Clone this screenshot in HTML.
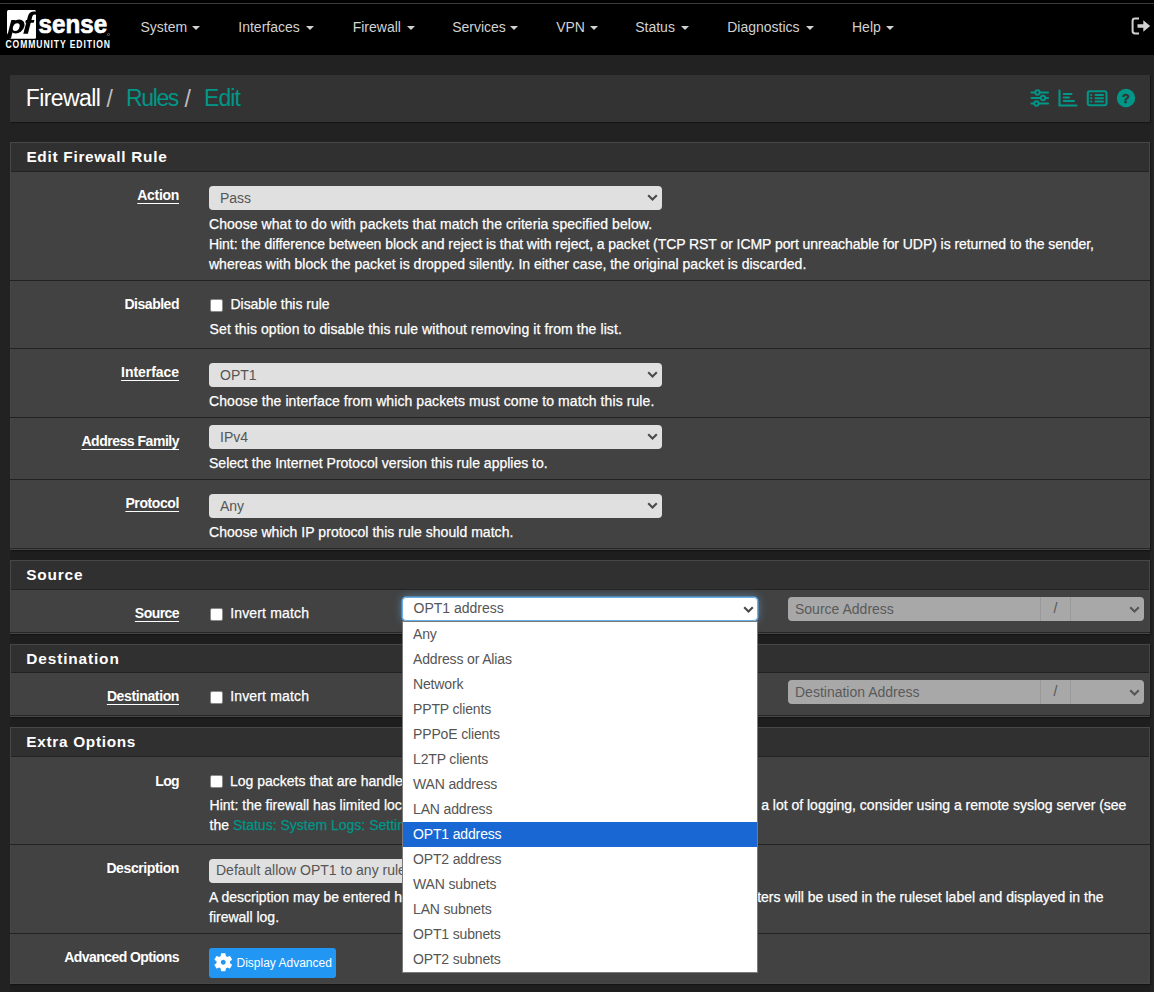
<!DOCTYPE html>
<html><head><meta charset="utf-8">
<style>
html,body{margin:0;padding:0;}
body{width:1154px;height:992px;overflow:hidden;position:relative;background:#222;font-family:"Liberation Sans",sans-serif;font-size:14px;color:#ffffff;}
div,span{box-sizing:border-box;}
.a{position:absolute;}
.t{position:absolute;white-space:nowrap;line-height:20px;font-size:14px;-webkit-text-stroke:0.25px currentColor;}
#nav{left:0;top:0;width:1154px;height:55px;background:#000;}
#navline{left:0;top:3px;width:1154px;height:1px;background:#3a3a3a;}
.ni{position:absolute;top:17px;line-height:20px;font-size:14px;color:#d2d2d2;white-space:nowrap;}
.caret{position:absolute;top:26px;width:0;height:0;border-left:4px solid transparent;border-right:4px solid transparent;border-top:4px solid #d2d2d2;}
#bc{left:10px;top:75px;width:1140px;height:47px;background:#333;box-shadow:1px 1px 1px rgba(0,0,0,0.35);}
.panel{position:absolute;left:10px;width:1140px;background:#424242;border:1px solid #474747;box-shadow:1px 1px 1px rgba(0,0,0,0.3);}
.ph{position:absolute;left:11px;width:1138px;background:#303030;}
.ptitle{position:absolute;font-weight:bold;font-size:15.4px;color:#fff;line-height:20px;white-space:nowrap;}
.sep{position:absolute;left:10px;width:1140px;height:1px;background:#222;}
.sepb{position:absolute;left:11px;width:1138px;height:1px;background:#262626;}
.lbl{position:absolute;right:975px;font-weight:bold;font-size:14px;color:#fff;line-height:20px;white-space:nowrap;}
.lbl.u{text-decoration:underline;text-underline-offset:3px;}
.sel{position:absolute;left:209px;width:453px;height:24px;background:#e0e0e0;border-radius:4px;}
.seltxt{position:absolute;left:11px;line-height:20px;font-size:14px;color:#555;white-space:nowrap;}
.chev{position:absolute;right:3.6px;top:8.3px;}
.cb{position:absolute;left:210px;width:13px;height:13px;background:#fff;border:1px solid #8a8a8a;border-radius:2px;}
.addr{position:absolute;left:788px;width:356px;height:24px;background:#a8a8a8;border-radius:4px;}
.addrtxt{position:absolute;left:7px;top:2px;line-height:20px;font-size:14px;color:#5a5a5a;white-space:nowrap;}
.addrslash{position:absolute;left:252px;top:0;width:31px;height:24px;border-left:1px solid #999;border-right:1px solid #999;text-align:center;line-height:22px;color:#555;}
.addr .chev{right:3.7px;top:8.6px;}
.inp{position:absolute;left:209px;width:453px;height:24px;background:#e0e0e0;border-radius:4px;}
.btn{position:absolute;left:209px;width:127px;height:30px;background:#2196f3;border-radius:3px;}
#osel{left:402px;top:597px;width:356px;height:24px;background:#fff;border:1px solid #66afe9;border-radius:4px;box-shadow:0 0 0 0.4px #66afe9,0 0 8px rgba(102,175,233,0.6);}
#dd{left:402px;top:621px;width:356px;height:352px;background:#fff;border:1px solid #7a7a7a;}
.ddi{position:absolute;left:0;right:0;height:25px;line-height:24px;padding-left:10px;font-size:14px;color:#555;white-space:nowrap;letter-spacing:-0.15px;}
</style></head><body>
<div id="nav" class="a"></div><div id="navline" class="a"></div>
<svg class="a" style="left:0;top:0" width="120" height="55" viewBox="0 0 120 55">
  <path d="M8.5,10 H34.5 Q36,10 36,11.5 V37.3 Q36,38.8 34.5,38.8 H9.7 L7,32.8 V11.5 Q7,10 8.5,10 Z" fill="#fff"/>
  <g fill="#000">
    <ellipse cx="17.4" cy="26.55" rx="6.9" ry="7.05" transform="translate(17.4,26.55) skewX(-14) translate(-17.4,-26.55)"/>
    <path d="M11.3,19.9 H15.6 L10.9,38.8 H6.5 Z"/>
    <path d="M23.3,33.7 H27.9 L32.3,16.6 Q33,14.2 35,14.6 L36,14.7 V11.6 L34,11.5 Q29.2,11.4 27.9,16.6 Z"/>
    <path d="M25.9,20 H34.4 L33.8,22.7 H25.2 Z"/>
  </g>
  <ellipse cx="16.25" cy="27.1" rx="3.25" ry="3.9" fill="#fff" transform="translate(16.25,27.1) skewX(-14) translate(-16.25,-27.1)"/>
  <text x="38.6" y="33.4" font-family="Liberation Sans" font-weight="bold" font-size="26.3" textLength="68.5" lengthAdjust="spacingAndGlyphs" fill="#fff" stroke="#fff" stroke-width="0.7">sense</text>
  <circle cx="108.5" cy="34.6" r="1.1" fill="none" stroke="#aaa" stroke-width="0.5"/><text x="6.4" y="47.9" transform="scale(0.86,1)" font-family="Liberation Sans" font-weight="bold" font-size="10" textLength="121.5" lengthAdjust="spacing" fill="#fff">COMMUNITY EDITION</text>
</svg>
<span class="ni" style="left:140.5px">System</span><span class="caret" style="left:192.3px"></span>
<span class="ni" style="left:238.3px">Interfaces</span><span class="caret" style="left:306px"></span>
<span class="ni" style="left:352.7px">Firewall</span><span class="caret" style="left:406.5px"></span>
<span class="ni" style="left:452.2px">Services</span><span class="caret" style="left:510px"></span>
<span class="ni" style="left:556.2px">VPN</span><span class="caret" style="left:590px"></span>
<span class="ni" style="left:635.2px">Status</span><span class="caret" style="left:681px"></span>
<span class="ni" style="left:727.2px">Diagnostics</span><span class="caret" style="left:806px"></span>
<span class="ni" style="left:852px">Help</span><span class="caret" style="left:886px"></span>
<svg class="a" style="left:1128px;top:14px" width="26" height="24" viewBox="0 0 26 24">
  <path d="M11,4.6 H7 Q4.6,4.6 4.6,7 V17 Q4.6,19.4 7,19.4 H11" fill="none" stroke="#d2d2d2" stroke-width="2"/>
  <path d="M9.5,10.2 H15.3 V6.3 L22.2,12 L15.3,17.7 V13.8 H9.5 Z" fill="#d2d2d2"/>
</svg>
<div id="bc" class="a"></div>
<svg class="a" style="left:1028px;top:87px" width="112" height="22" viewBox="1028 87 112 22">
  <g stroke="#009688" fill="none" stroke-width="2.2" stroke-linecap="round">
    <line x1="1031.5" y1="92.5" x2="1048" y2="92.5"/><line x1="1031.5" y1="98" x2="1048" y2="98"/><line x1="1031.5" y1="103.5" x2="1048" y2="103.5"/>
  </g>
  <g stroke="#009688" fill="#333" stroke-width="1.9">
    <circle cx="1037.5" cy="92.5" r="2.2"/><circle cx="1043" cy="98" r="2.2"/><circle cx="1036.5" cy="103.5" r="2.2"/>
  </g>
  <g stroke="#009688" fill="none" stroke-width="2.1" stroke-linecap="round">
    <path d="M1059.5,90.5 V105.5 H1076.5"/>
    <line x1="1063.8" y1="94" x2="1071.5" y2="94"/><line x1="1063.8" y1="97.5" x2="1069" y2="97.5"/><line x1="1063.8" y1="101" x2="1074" y2="101"/>
    <rect x="1087.8" y="91.3" width="18.7" height="14" rx="2" ry="2"/>
    <line x1="1095.5" y1="95" x2="1103" y2="95"/><line x1="1095.5" y1="98.2" x2="1103" y2="98.2"/><line x1="1095.5" y1="101.5" x2="1103" y2="101.5"/>
  </g>
  <g fill="#009688">
    <circle cx="1091.2" cy="95" r="1.1"/><circle cx="1091.2" cy="98.2" r="1.1"/><circle cx="1091.2" cy="101.5" r="1.1"/>
    <circle cx="1126" cy="98" r="9.2"/>
  </g>
  <text x="1126" y="102.5" text-anchor="middle" font-family="Liberation Sans" font-weight="bold" font-size="13" fill="#333" stroke="#333" stroke-width="0.4">?</text>
</svg>
<div class="a" style="left:10px;top:142px;width:1140px;height:850px;background:#1e1e1e"></div>
<div class="panel" style="top:142px;height:408px"></div>
<div class="ph" style="top:143px;height:28px"></div>
<div class="sepb" style="top:171px;background:#222"></div>
<div class="sep" style="top:548px;background:#262626"></div>
<div class="panel" style="top:560px;height:74px"></div>
<div class="ph" style="top:561px;height:28px"></div>
<div class="sepb" style="top:589px;background:#222"></div>
<div class="sep" style="top:632px;background:#262626"></div>
<div class="panel" style="top:644px;height:73px"></div>
<div class="ph" style="top:645px;height:27px"></div>
<div class="sepb" style="top:672px;background:#222"></div>
<div class="sep" style="top:715px;background:#262626"></div>
<div class="panel" style="top:727px;height:257px"></div>
<div class="ph" style="top:728px;height:28px"></div>
<div class="sepb" style="top:756px;background:#222"></div>
<div class="sep" style="top:280px"></div>
<div class="sep" style="top:348px"></div>
<div class="sep" style="top:417px"></div>
<div class="sep" style="top:479px"></div>
<div class="sep" style="top:844px"></div>
<div class="sep" style="top:933px"></div>
<div class="sel" style="top:186px"><span class="seltxt" style="top:2px">Pass</span><svg class="chev" width="11" height="8" viewBox="0 0 11 8"><path d="M1.2,1.2 L5.5,5.5 L9.8,1.2" fill="none" stroke="#4a4a4a" stroke-width="2.1"/></svg></div>
<div class="cb" style="top:299px"></div>
<div class="sel" style="top:363px"><span class="seltxt" style="top:2px">OPT1</span><svg class="chev" width="11" height="8" viewBox="0 0 11 8"><path d="M1.2,1.2 L5.5,5.5 L9.8,1.2" fill="none" stroke="#4a4a4a" stroke-width="2.1"/></svg></div>
<div class="sel" style="top:425px"><span class="seltxt" style="top:2px">IPv4</span><svg class="chev" width="11" height="8" viewBox="0 0 11 8"><path d="M1.2,1.2 L5.5,5.5 L9.8,1.2" fill="none" stroke="#4a4a4a" stroke-width="2.1"/></svg></div>
<div class="sel" style="top:494px"><span class="seltxt" style="top:2px">Any</span><svg class="chev" width="11" height="8" viewBox="0 0 11 8"><path d="M1.2,1.2 L5.5,5.5 L9.8,1.2" fill="none" stroke="#4a4a4a" stroke-width="2.1"/></svg></div>
<div class="cb" style="top:608px"></div>
<div class="addr" style="top:597px"><span class="addrtxt">Source Address</span><span class="addrslash">/</span><svg class="chev" width="11" height="8" viewBox="0 0 11 8"><path d="M1.2,1.2 L5.5,5.5 L9.8,1.2" fill="none" stroke="#555" stroke-width="2.1"/></svg></div>
<div class="cb" style="top:691px"></div>
<div class="addr" style="top:680px"><span class="addrtxt">Destination Address</span><span class="addrslash">/</span><svg class="chev" width="11" height="8" viewBox="0 0 11 8"><path d="M1.2,1.2 L5.5,5.5 L9.8,1.2" fill="none" stroke="#555" stroke-width="2.1"/></svg></div>
<div class="cb" style="top:775px"></div>
<div class="inp" style="top:859px"><span class="seltxt" style="left:7px;top:1px">Default allow OPT1 to any rule</span></div>
<span class="t" style="right:50.5px;top:887px">characters will be used in the ruleset label and displayed in the</span>
<div class="btn" style="top:948px"><svg class="a" style="left:2.75px;top:2.75px" width="22.5" height="22.5" viewBox="0 0 24 24"><path fill="#fff" d="M19.14,12.94c.04-.3.06-.61.06-.94c0-.32-.02-.64-.07-.94l2.03-1.58c.18-.14.23-.41.12-.61l-1.92-3.32c-.12-.22-.37-.29-.59-.22l-2.39.96c-.5-.38-1.030-.7-1.62-.94L14.4,2.81c-.04-.24-.24-.41-.48-.41h-3.84c-.24,0-.43.17-.47.41L9.25,5.35C8.66,5.59,8.12,5.92,7.63,6.29L5.24,5.330c-.22-.08-.47,0-.59.22L2.74,8.87C2.62,9.08,2.66,9.34,2.86,9.48l2.03,1.58C4.84,11.36,4.8,11.69,4.8,12s.02.64.07.94l-2.03,1.58c-.18.14-.23.41-.12.61l1.92,3.32c.12.22.37.29.59.22l2.39-.96c.5.38,1.03.7,1.62.94l.36,2.54c.05.24.24.41.48.41h3.84c.24,0,.44-.17.47-.41l.36-2.54c.59-.24,1.13-.56,1.62-.94l2.39.96c.22.08.47,0,.59-.22l1.920-3.32c.12-.22.07-.47-.12-.61L19.14,12.94z M12,14.6c-1.43,0-2.6-1.17-2.6-2.6s1.17-2.6,2.6-2.6s2.6,1.17,2.6,2.6S13.43,14.6,12,14.6z"/></svg><span class="a" style="left:27.5px;top:5px;line-height:20px;font-size:12px;color:#fff;white-space:nowrap">Display Advanced</span></div>
<span id="x0" class="t" style="left:25.8px;top:83px;font-size:23px;line-height:30px;-webkit-text-stroke:0;color:#fff;letter-spacing:-0.591px">Firewall</span>
<span id="x1" class="t" style="left:106.5px;top:84px;font-size:23px;line-height:30px;-webkit-text-stroke:0;color:#bdbdbd">/</span>
<span id="x2" class="t" style="left:126px;top:83px;font-size:23px;line-height:30px;-webkit-text-stroke:0;color:#009688;letter-spacing:-1.378px">Rules</span>
<span id="x3" class="t" style="left:184.5px;top:84px;font-size:23px;line-height:30px;-webkit-text-stroke:0;color:#bdbdbd">/</span>
<span id="x4" class="t" style="left:204px;top:83px;font-size:23px;line-height:30px;-webkit-text-stroke:0;color:#009688;letter-spacing:-0.879px">Edit</span>
<span id="x5" class="ptitle" style="left:26.4px;top:147px;;letter-spacing:0.712px">Edit Firewall Rule</span>
<span id="x6" class="lbl u" style="top:185px;;letter-spacing:-0.312px">Action</span>
<span id="x7" class="t" style="left:209px;top:214px;;letter-spacing:0.060px">Choose what to do with packets that match the criteria specified below.</span>
<span id="x8" class="t" style="left:209px;top:234px;;letter-spacing:-0.062px">Hint: the difference between block and reject is that with reject, a packet (TCP RST or ICMP port unreachable for UDP) is returned to the sender,</span>
<span id="x9" class="t" style="left:209px;top:254px;;letter-spacing:-0.001px">whereas with block the packet is dropped silently. In either case, the original packet is discarded.</span>
<span id="x10" class="lbl" style="top:294px;;letter-spacing:-0.480px">Disabled</span>
<span id="x11" class="t" style="left:230.5px;top:293.8px;;letter-spacing:-0.038px">Disable this rule</span>
<span id="x12" class="t" style="left:209.6px;top:319px;;letter-spacing:0.086px">Set this option to disable this rule without removing it from the list.</span>
<span id="x13" class="lbl u" style="top:362px;;letter-spacing:-0.045px">Interface</span>
<span id="x14" class="t" style="left:209px;top:390.5px;;letter-spacing:0.083px">Choose the interface from which packets must come to match this rule.</span>
<span id="x15" class="lbl u" style="top:430.5px;;letter-spacing:-0.482px">Address Family</span>
<span id="x16" class="t" style="left:209px;top:452.5px;;letter-spacing:0.003px">Select the Internet Protocol version this rule applies to.</span>
<span id="x17" class="lbl u" style="top:493px;;letter-spacing:-0.399px">Protocol</span>
<span id="x18" class="t" style="left:209px;top:521.5px;;letter-spacing:0.041px">Choose which IP protocol this rule should match.</span>
<span id="x19" class="ptitle" style="left:26.3px;top:564.5px;;letter-spacing:0.802px">Source</span>
<span id="x20" class="lbl u" style="top:603px;;letter-spacing:-0.555px">Source</span>
<span id="x21" class="t" style="left:230.2px;top:603px;;letter-spacing:0.161px">Invert match</span>
<span id="x22" class="ptitle" style="left:26.3px;top:648.5px;;letter-spacing:0.870px">Destination</span>
<span id="x23" class="lbl u" style="top:686px;;letter-spacing:-0.373px">Destination</span>
<span id="x24" class="t" style="left:230.2px;top:686px;;letter-spacing:0.161px">Invert match</span>
<span id="x25" class="ptitle" style="left:26.3px;top:731.7px;;letter-spacing:0.682px">Extra Options</span>
<span id="x26" class="lbl" style="top:770.6px;;letter-spacing:-0.628px">Log</span>
<span id="x27" class="t" style="left:230px;top:770.6px;">Log packets that are handled by this rule</span>
<span id="x28" class="t" style="left:209.6px;top:795.3px;">Hint: the firewall has limited local log space. Don't turn on logging for everything. If doing</span>
<span id="x29" class="t" style="left:761.2px;top:795.3px;;letter-spacing:-0.009px">a lot of logging, consider using a remote syslog server (see</span>
<span id="x30" class="t" style="left:209.6px;top:814.5px;">the <span style="color:#009688">Status: System Logs: Settings</span> page).</span>
<span id="x31" class="lbl" style="top:858px;;letter-spacing:-0.402px">Description</span>
<span id="x32" class="t" style="left:209px;top:887px;">A description may be entered here for administrative reference. A maximum of 52 charac</span>
<span id="x33" class="t" style="left:209px;top:907px;">firewall log.</span>
<span id="x34" class="lbl" style="top:947px;;letter-spacing:-0.552px">Advanced Options</span>
<div id="osel" class="a"><span class="a" style="left:10.5px;top:0px;line-height:20px;font-size:14px;color:#555;white-space:nowrap">OPT1 address</span><svg class="chev" style="right:3.25px;top:7.5px" width="11" height="8" viewBox="0 0 11 8"><path d="M1.2,1.2 L5.5,5.5 L9.8,1.2" fill="none" stroke="#4a4a4a" stroke-width="2.1"/></svg></div>
<div id="dd" class="a">
<div class="ddi" style="top:0px;">Any</div>
<div class="ddi" style="top:25px;">Address or Alias</div>
<div class="ddi" style="top:50px;">Network</div>
<div class="ddi" style="top:75px;">PPTP clients</div>
<div class="ddi" style="top:100px;">PPPoE clients</div>
<div class="ddi" style="top:125px;">L2TP clients</div>
<div class="ddi" style="top:150px;">WAN address</div>
<div class="ddi" style="top:175px;">LAN address</div>
<div class="ddi" style="top:200px;background:#1967d2;color:#fff;">OPT1 address</div>
<div class="ddi" style="top:225px;">OPT2 address</div>
<div class="ddi" style="top:250px;">WAN subnets</div>
<div class="ddi" style="top:275px;">LAN subnets</div>
<div class="ddi" style="top:300px;">OPT1 subnets</div>
<div class="ddi" style="top:325px;">OPT2 subnets</div>
</div>
</body></html>
